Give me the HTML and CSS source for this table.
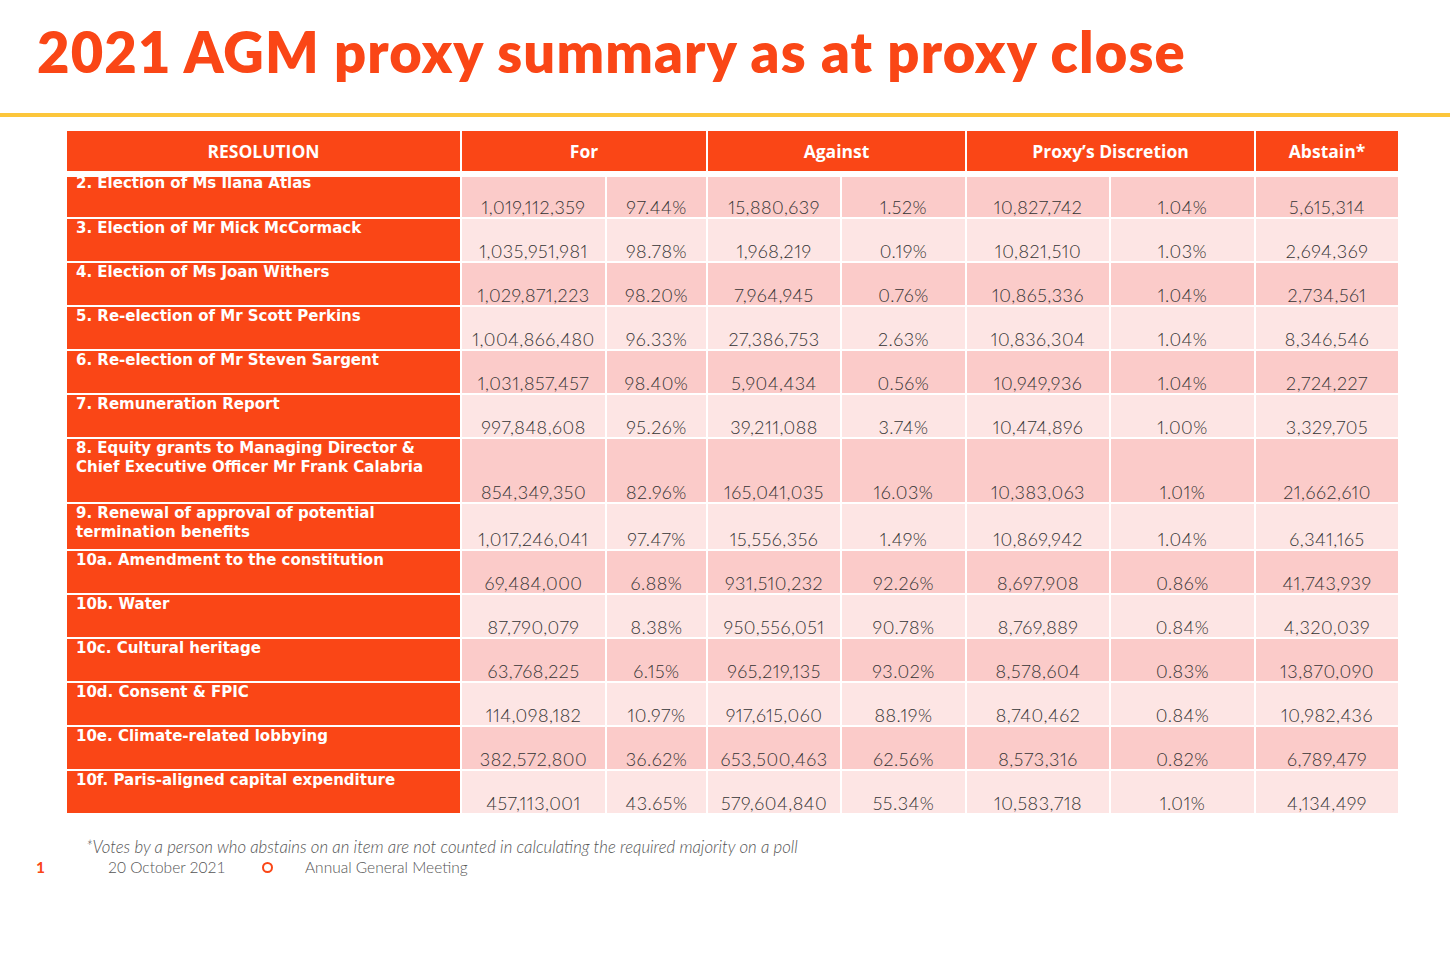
FILE: index.html
```html
<!DOCTYPE html>
<html lang="en">
<head>
<meta charset="utf-8">
<title>2021 AGM proxy summary</title>
<link rel="stylesheet" href="styles.css">
</head>
<body>
<header class="top">
  <h1 class="title">2021 AGM proxy summary as at proxy close</h1>
</header>
<main class="content">
  <div class="grid head">
    <div class="hcell">RESOLUTION</div>
    <div class="hcell span2">For</div>
    <div class="hcell span2">Against</div>
    <div class="hcell span2">Proxy’s Discretion</div>
    <div class="hcell">Abstain*</div>
  </div>
  <div class="grid body">
    <div class="res first"><span class="shift">2. Election of Ms Ilana Atlas</span></div>
    <div class="num dark">1,019,112,359</div><div class="num dark">97.44%</div><div class="num dark">15,880,639</div><div class="num dark">1.52%</div><div class="num dark">10,827,742</div><div class="num dark">1.04%</div><div class="num dark">5,615,314</div>

    <div class="res">3. Election of Mr Mick McCormack</div>
    <div class="num light">1,035,951,981</div><div class="num light">98.78%</div><div class="num light">1,968,219</div><div class="num light">0.19%</div><div class="num light">10,821,510</div><div class="num light">1.03%</div><div class="num light">2,694,369</div>

    <div class="res">4. Election of Ms Joan Withers</div>
    <div class="num dark">1,029,871,223</div><div class="num dark">98.20%</div><div class="num dark">7,964,945</div><div class="num dark">0.76%</div><div class="num dark">10,865,336</div><div class="num dark">1.04%</div><div class="num dark">2,734,561</div>

    <div class="res">5. Re-election of Mr Scott Perkins</div>
    <div class="num light">1,004,866,480</div><div class="num light">96.33%</div><div class="num light">27,386,753</div><div class="num light">2.63%</div><div class="num light">10,836,304</div><div class="num light">1.04%</div><div class="num light">8,346,546</div>

    <div class="res">6. Re-election of Mr Steven Sargent</div>
    <div class="num dark">1,031,857,457</div><div class="num dark">98.40%</div><div class="num dark">5,904,434</div><div class="num dark">0.56%</div><div class="num dark">10,949,936</div><div class="num dark">1.04%</div><div class="num dark">2,724,227</div>

    <div class="res">7. Remuneration Report</div>
    <div class="num light">997,848,608</div><div class="num light">95.26%</div><div class="num light">39,211,088</div><div class="num light">3.74%</div><div class="num light">10,474,896</div><div class="num light">1.00%</div><div class="num light">3,329,705</div>

    <div class="res">8. Equity grants to Managing Director &amp;<br>Chief Executive Officer Mr Frank Calabria</div>
    <div class="num dark">854,349,350</div><div class="num dark">82.96%</div><div class="num dark">165,041,035</div><div class="num dark">16.03%</div><div class="num dark">10,383,063</div><div class="num dark">1.01%</div><div class="num dark">21,662,610</div>

    <div class="res">9. Renewal of approval of potential<br>termination benefits</div>
    <div class="num light">1,017,246,041</div><div class="num light">97.47%</div><div class="num light">15,556,356</div><div class="num light">1.49%</div><div class="num light">10,869,942</div><div class="num light">1.04%</div><div class="num light">6,341,165</div>

    <div class="res">10a. Amendment to the constitution</div>
    <div class="num dark">69,484,000</div><div class="num dark">6.88%</div><div class="num dark">931,510,232</div><div class="num dark">92.26%</div><div class="num dark">8,697,908</div><div class="num dark">0.86%</div><div class="num dark">41,743,939</div>

    <div class="res">10b. Water</div>
    <div class="num light">87,790,079</div><div class="num light">8.38%</div><div class="num light">950,556,051</div><div class="num light">90.78%</div><div class="num light">8,769,889</div><div class="num light">0.84%</div><div class="num light">4,320,039</div>

    <div class="res">10c. Cultural heritage</div>
    <div class="num dark">63,768,225</div><div class="num dark">6.15%</div><div class="num dark">965,219,135</div><div class="num dark">93.02%</div><div class="num dark">8,578,604</div><div class="num dark">0.83%</div><div class="num dark">13,870,090</div>

    <div class="res">10d. Consent &amp; FPIC</div>
    <div class="num light">114,098,182</div><div class="num light">10.97%</div><div class="num light">917,615,060</div><div class="num light">88.19%</div><div class="num light">8,740,462</div><div class="num light">0.84%</div><div class="num light">10,982,436</div>

    <div class="res">10e. Climate-related lobbying</div>
    <div class="num dark">382,572,800</div><div class="num dark">36.62%</div><div class="num dark">653,500,463</div><div class="num dark">62.56%</div><div class="num dark">8,573,316</div><div class="num dark">0.82%</div><div class="num dark">6,789,479</div>

    <div class="res">10f. Paris-aligned capital expenditure</div>
    <div class="num light">457,113,001</div><div class="num light">43.65%</div><div class="num light">579,604,840</div><div class="num light">55.34%</div><div class="num light">10,583,718</div><div class="num light">1.01%</div><div class="num light">4,134,499</div>
  </div>
</main>
<footer class="foot">
  <p class="note">*Votes by a person who abstains on an item are not counted in calculating the required majority on a poll</p>
  <div class="meta">
    <span class="page">1</span>
    <span class="date">20 October 2021</span>
    <span class="ring"></span>
    <span class="event">Annual General Meeting</span>
  </div>
</footer>
</body>
</html>
```

FILE: styles.css
```css
html, body {
  margin: 0;
  padding: 0;
  background: #ffffff;
}

body {
  width: 1450px;
  height: 955px;
  overflow: hidden;
  font-family: "Lato", "Liberation Sans", sans-serif;
}

.top {
  padding-top: 24px;
  height: 89px;
  border-bottom: 4px solid #fcc63b;
  box-sizing: content-box;
}

.title {
  margin: 0 0 0 37px;
  font-size: 56px;
  line-height: 56px;
  font-weight: 800;
  color: #fa4616;
  letter-spacing: 1.15px;
}

.content {
  padding: 14px 0 0 67px;
}

.grid {
  display: grid;
  grid-template-columns: 393px 143px 99px 132px 123px 142px 143px 142px;
  column-gap: 2px;
  width: 1331px;
}

.head {
  margin-bottom: 6px;
}

.hcell {
  height: 40px;
  background: #fa4616;
  color: #ffffff;
  font-family: "Open Sans", "Lato", sans-serif;
  font-weight: 700;
  font-size: 17.5px;
  display: flex;
  align-items: center;
  justify-content: center;
}

.span2 {
  grid-column: span 2;
}

.body {
  row-gap: 2px;
  grid-template-rows: 40px repeat(5, 42px) 63px 45px repeat(6, 42px);
}

.res {
  background: #fa4616;
  color: #ffffff;
  font-family: "DejaVu Sans", "Open Sans", sans-serif;
  font-weight: 700;
  font-size: 15px;
  line-height: 19px;
  padding: 0 8px 0 9px;
  overflow: hidden;
}

.shift {
  display: block;
  margin-top: -3px;
}

.num {
  display: flex;
  align-items: flex-end;
  justify-content: center;
  font-size: 18px;
  font-weight: 300;
  line-height: 18px;
  font-variant-numeric: proportional-nums;
  letter-spacing: 0.5px;
  color: #333333;
  padding-bottom: 1px;
  box-sizing: border-box;
}

.dark {
  background: #fbcbc9;
}

.light {
  background: #fde5e4;
}

.foot {
  padding-top: 24px;
  color: #555555;
  font-size: 15.5px;
  font-weight: 300;
}

.note {
  margin: 0 0 0 86px;
  font-style: italic;
  font-size: 16.8px;
  line-height: 20px;
  letter-spacing: 0;
}

.meta {
  display: flex;
  align-items: center;
  height: 20px;
}

.page {
  color: #fa4616;
  margin-left: 36px;
  width: 72px;
  font-weight: 700;
}

.date {
  width: 154px;
}

.ring {
  width: 7px;
  height: 7px;
  border: 2px solid #fa4616;
  border-radius: 50%;
  margin-right: 32px;
}

.event {
}
```
